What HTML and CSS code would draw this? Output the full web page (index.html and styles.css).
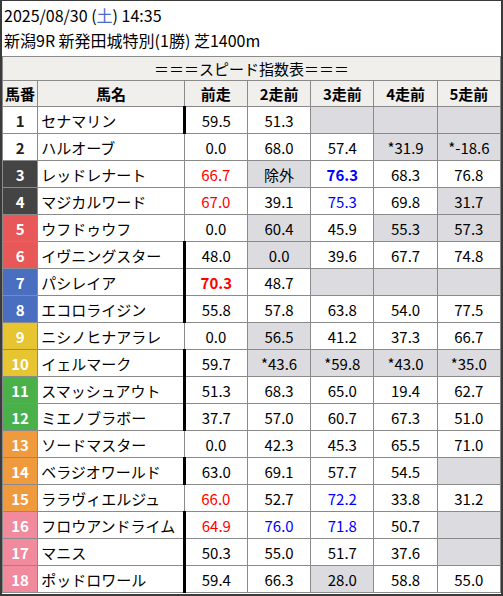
FILE: index.html
```html
<!DOCTYPE html>
<html lang="ja">
<head>
<meta charset="utf-8">
<link rel="stylesheet" href="styles.css">
</head>
<body>
<div class="frame">
  <div class="info">
    <div class="line">2025/08/30 (<span class="sat">土</span>) 14:35</div>
    <div class="line">新潟9R 新発田城特別(1勝) 芝1400m</div>
  </div>
  <table class="speed">
    <colgroup>
      <col class="c-num"><col class="c-name"><col class="c-v"><col class="c-v"><col class="c-v"><col class="c-v"><col class="c-v5">
    </colgroup>
    <thead>
      <tr><th colspan="7" class="title">＝＝＝スピード指数表＝＝＝</th></tr>
      <tr><th>馬番</th><th>馬名</th><th>前走</th><th>2走前</th><th>3走前</th><th>4走前</th><th>5走前</th></tr>
    </thead>
    <tbody>
      <tr><td class="n w1">1</td><td class="nm">セナマリン</td><td class="tl">59.5</td><td>51.3</td><td class="g"></td><td class="g"></td><td class="g"></td></tr>
      <tr><td class="n w1">2</td><td class="nm">ハルオーブ</td><td>0.0</td><td>68.0</td><td>57.4</td><td class="g">*31.9</td><td class="g">*-18.6</td></tr>
      <tr><td class="n w2">3</td><td class="nm">レッドレナート</td><td class="red">66.7</td><td class="g">除外</td><td class="blue b">76.3</td><td>68.3</td><td>76.8</td></tr>
      <tr><td class="n w2">4</td><td class="nm">マジカルワード</td><td class="red">67.0</td><td>39.1</td><td class="blue">75.3</td><td>69.8</td><td class="g">31.7</td></tr>
      <tr><td class="n w3">5</td><td class="nm">ウフドゥウフ</td><td>0.0</td><td class="g">60.4</td><td>45.9</td><td class="g">55.3</td><td class="g">57.3</td></tr>
      <tr><td class="n w3">6</td><td class="nm">イヴニングスター</td><td class="tl">48.0</td><td class="g">0.0</td><td>39.6</td><td>67.7</td><td>74.8</td></tr>
      <tr><td class="n w4">7</td><td class="nm">パシレイア</td><td class="tl red b">70.3</td><td>48.7</td><td class="g"></td><td class="g"></td><td class="g"></td></tr>
      <tr><td class="n w4">8</td><td class="nm">エコロライジン</td><td class="tl">55.8</td><td>57.8</td><td>63.8</td><td>54.0</td><td>77.5</td></tr>
      <tr><td class="n w5">9</td><td class="nm">ニシノヒナアラレ</td><td>0.0</td><td class="g">56.5</td><td>41.2</td><td>37.3</td><td>66.7</td></tr>
      <tr><td class="n w5">10</td><td class="nm">イェルマーク</td><td class="tl">59.7</td><td class="g">*43.6</td><td class="g">*59.8</td><td class="g">*43.0</td><td class="g">*35.0</td></tr>
      <tr><td class="n w6">11</td><td class="nm">スマッシュアウト</td><td class="tl">51.3</td><td>68.3</td><td>65.0</td><td>19.4</td><td>62.7</td></tr>
      <tr><td class="n w6">12</td><td class="nm">ミエノブラボー</td><td class="tl">37.7</td><td>57.0</td><td>60.7</td><td>67.3</td><td>51.0</td></tr>
      <tr><td class="n w7">13</td><td class="nm">ソードマスター</td><td>0.0</td><td>42.3</td><td>45.3</td><td>65.5</td><td>71.0</td></tr>
      <tr><td class="n w7">14</td><td class="nm">ベラジオワールド</td><td class="tl">63.0</td><td>69.1</td><td>57.7</td><td>54.5</td><td class="g"></td></tr>
      <tr><td class="n w7">15</td><td class="nm">ララヴィエルジュ</td><td class="red">66.0</td><td>52.7</td><td class="blue">72.2</td><td>33.8</td><td>31.2</td></tr>
      <tr><td class="n w8">16</td><td class="nm">フロウアンドライム</td><td class="tl red">64.9</td><td class="blue">76.0</td><td class="blue">71.8</td><td>50.7</td><td class="g"></td></tr>
      <tr><td class="n w8">17</td><td class="nm">マニス</td><td class="tl">50.3</td><td>55.0</td><td>51.7</td><td>37.6</td><td class="g"></td></tr>
      <tr><td class="n w8">18</td><td class="nm">ポッドロワール</td><td class="tl">59.4</td><td>66.3</td><td class="g">28.0</td><td>58.8</td><td>55.0</td></tr>
    </tbody>
  </table>
</div>
</body>
</html>
```
FILE: styles.css
```css
html, body {
  margin: 0;
  padding: 0;
  background: #3a3a3a;
}
body {
  width: 503px;
  height: 596px;
  overflow: hidden;
  font-family: "Noto Sans CJK JP", "Noto Sans", sans-serif;
  color: #000;
}
.frame {
  margin: 1px 2px 0 2px;
  background: #fff;
  height: 593px;
}
.info {
  padding: 2px 0 0 2px;
  height: 53px;
  font-size: 16px;
}
.line {
  height: 25px;
  line-height: 25px;
}
.sat { color: #4a6ad0; }
.speed {
  border-collapse: collapse;
  table-layout: fixed;
  width: 499px;
  font-size: 15px;
  border: 1px solid #666;
}
.c-num { width: 35px; }
.c-name { width: 146px; }
.c-v { width: 63px; }
.c-v5 { width: 63px; }
.speed th, .speed td {
  border: 1px solid #8a8a8a;
  padding: 0;
  text-align: center;
  white-space: nowrap;
  overflow: hidden;
}
.speed th {
  background: #f1efeb;
  font-weight: bold;
  height: 25px;
}
.speed th.title {
  font-weight: normal;
  height: 23px;
}
.speed td {
  height: 26px;
  background: #fff;
}
.speed td.nm {
  text-align: left;
  padding-left: 3px;
}
.speed td.n {
  font-weight: bold;
  color: #fff;
}
.speed td.tl { border-left: 3px solid #000; }
.speed td.g { background: #dcdce0; }
.red { color: #ff0000; }
.blue { color: #0000ff; }
.b { font-weight: bold; }
.speed td.w1 { background: #fff; color: #222; }
.speed td.w2 { background: #444; }
.speed td.w3 { background: #e85858; }
.speed td.w4 { background: #4a6fc0; }
.speed td.w5 { background: #e6c531; }
.speed td.w6 { background: #4ab04a; }
.speed td.w7 { background: #ef9a3d; }
.speed td.w8 { background: #f08a9c; }
```
